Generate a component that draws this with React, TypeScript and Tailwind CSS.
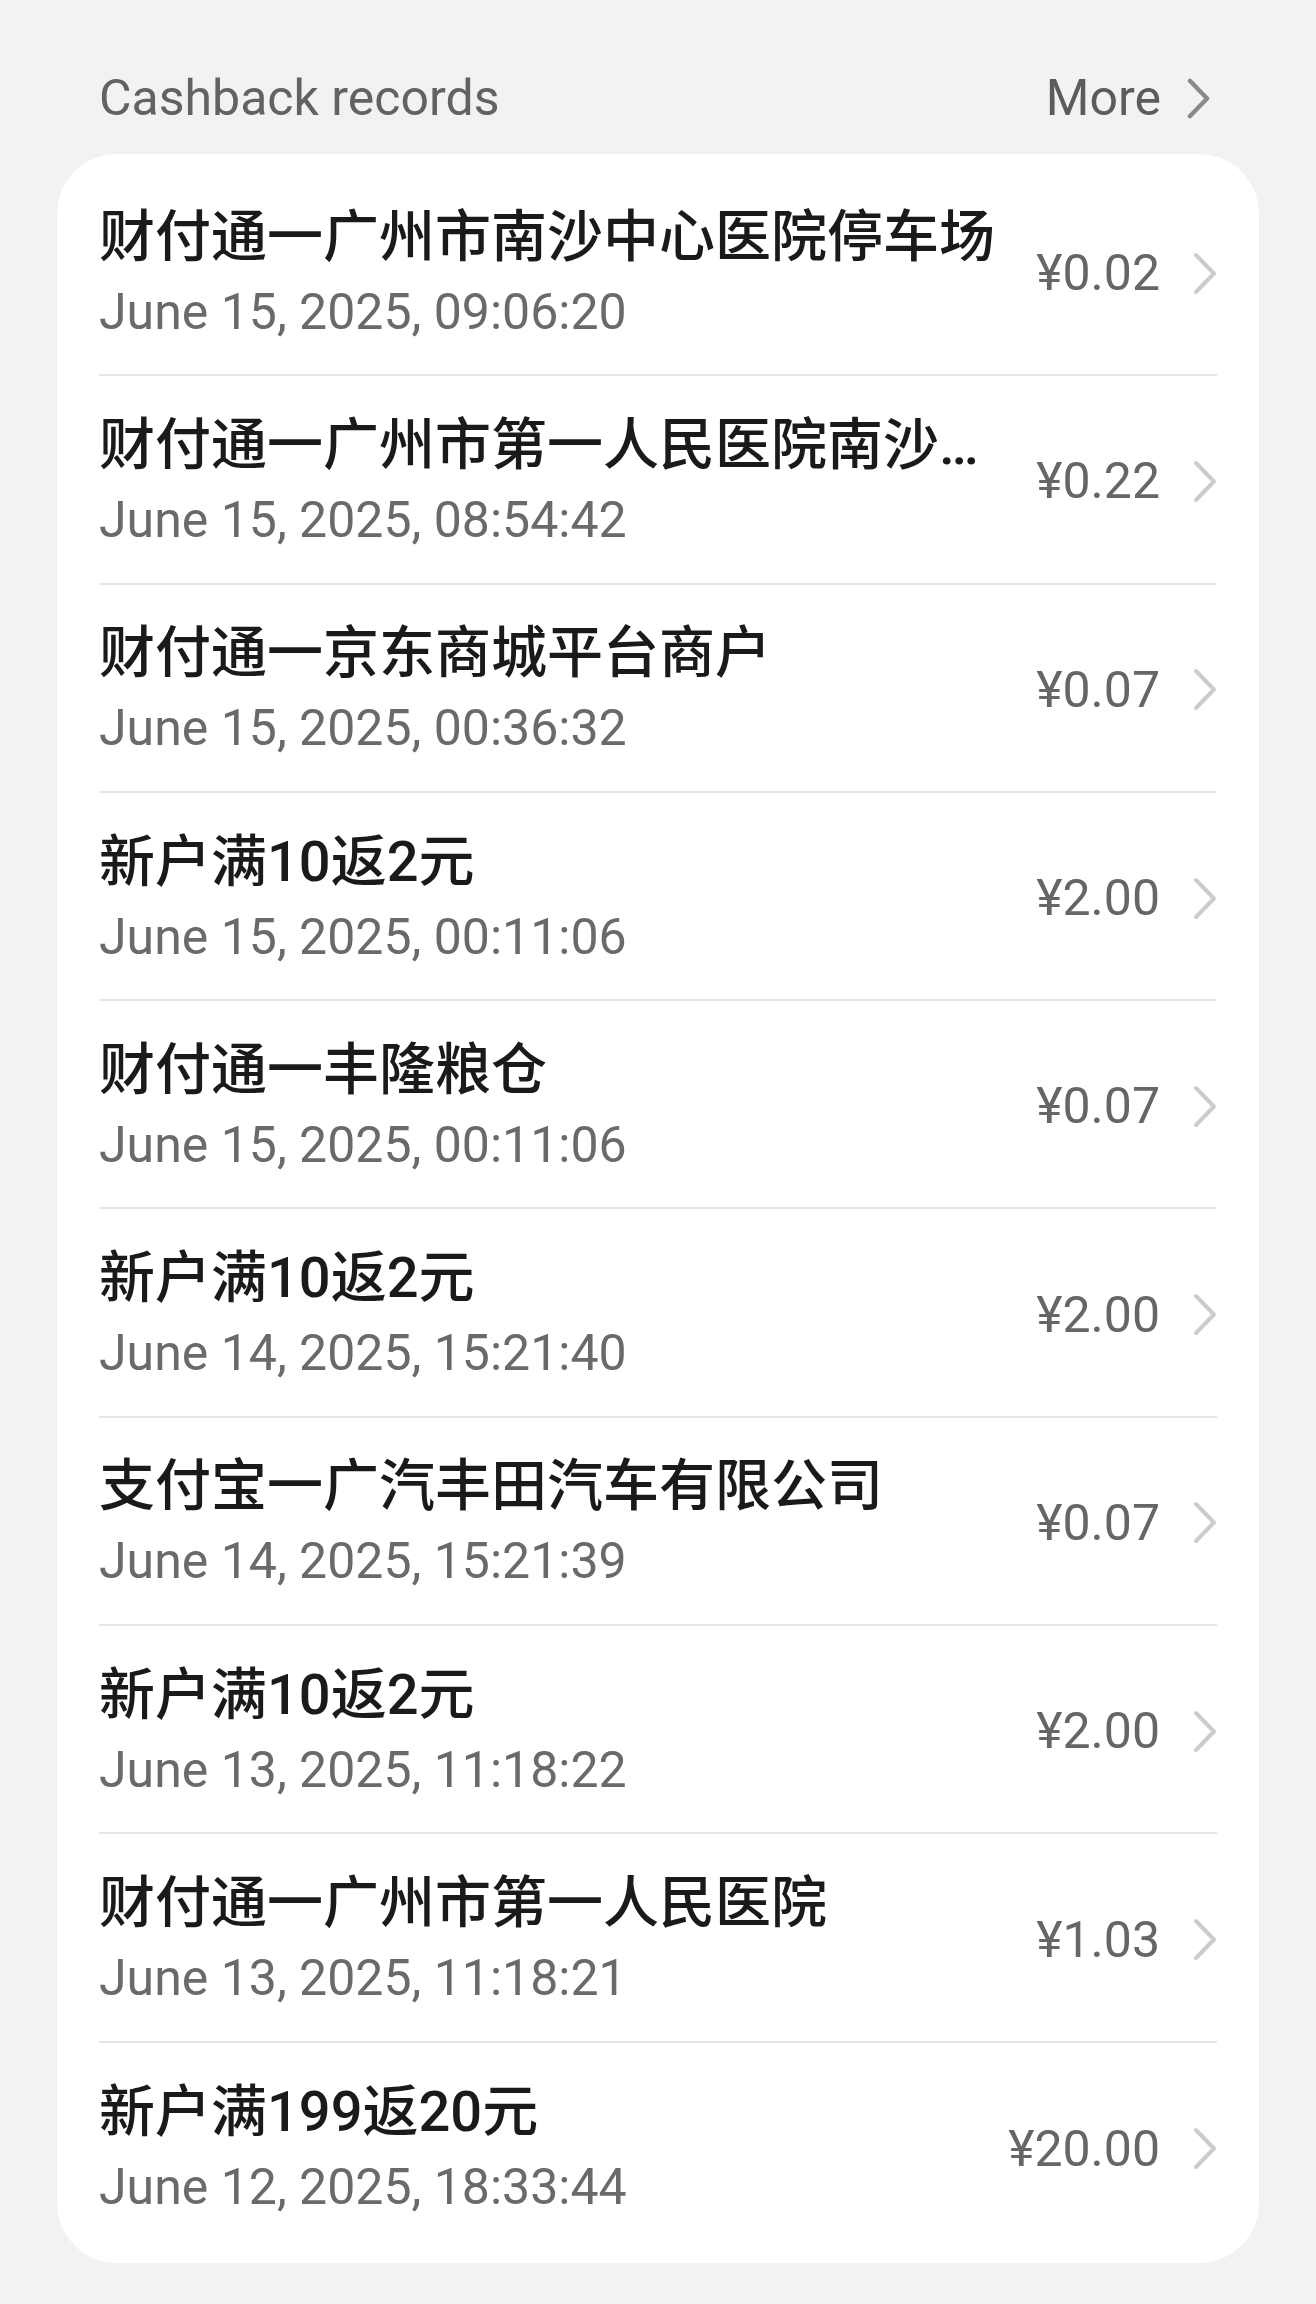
import React from "react";

const rows = [
  { t: "财付通一广州市南沙中心医院停车场", d: "June 15, 2025, 09:06:20", a: "¥0.02" },
  { t: "财付通一广州市第一人民医院南沙院区", d: "June 15, 2025, 08:54:42", a: "¥0.22" },
  { t: "财付通一京东商城平台商户", d: "June 15, 2025, 00:36:32", a: "¥0.07" },
  { t: "新户满10返2元", d: "June 15, 2025, 00:11:06", a: "¥2.00" },
  { t: "财付通一丰隆粮仓", d: "June 15, 2025, 00:11:06", a: "¥0.07" },
  { t: "新户满10返2元", d: "June 14, 2025, 15:21:40", a: "¥2.00" },
  { t: "支付宝一广汽丰田汽车有限公司", d: "June 14, 2025, 15:21:39", a: "¥0.07" },
  { t: "新户满10返2元", d: "June 13, 2025, 11:18:22", a: "¥2.00" },
  { t: "财付通一广州市第一人民医院", d: "June 13, 2025, 11:18:21", a: "¥1.03" },
  { t: "新户满199返20元", d: "June 12, 2025, 18:33:44", a: "¥20.00" },
];

function Chevron({ color, w = 24, h = 43, sw = 4.5 }: { color: string; w?: number; h?: number; sw?: number }) {
  return (
    <svg width={w} height={h} viewBox="0 0 24 43" fill="none">
      <path d="M3 3 L21 21.5 L3 40" stroke={color} strokeWidth={sw} strokeLinecap="round" strokeLinejoin="round" />
    </svg>
  );
}

export default function App() {
  return (
    <div
      className="min-h-[2304px] w-full bg-[#f1f2f4] px-[57px]"
      style={{ fontFamily: "Roboto, 'Noto Sans CJK SC', sans-serif" }}
    >
      <div className="flex items-center justify-between pl-[42px] pr-[49px] pt-[60px] pb-[18px]">
        <span className="text-[50px] leading-[76px] text-[#626262]">Cashback records</span>
        <div className="flex items-center gap-[26px]">
          <span className="text-[50px] leading-[76px] text-[#5c5c5c]">More</span>
          <Chevron color="#8a8a8a" w={23} />
        </div>
      </div>
      <div className="rounded-[60px] bg-white px-[42px] pt-[14px] pb-[12px]">
        {rows.map((r, i) => (
          <div
            key={i}
            className={
              "flex h-[208.3px] items-center " +
              (i < rows.length - 1 ? "border-b-2 border-[#e6e6e6]" : "")
            }
          >
            <div className="flex w-[896px] min-w-0 flex-col pt-[12px]">
              <div className="truncate text-[56px] font-medium leading-[70px] text-[#1a1a1a]">{r.t}</div>
              <div className="text-[50px] leading-[81px] text-[#6a6a6a]">{r.d}</div>
            </div>
            <div className="flex flex-1 items-center justify-end gap-[33px] pt-[4px]">
              <span className="text-[50px] leading-[60px] text-[#666666]">{r.a}</span>
              <Chevron color="#cccccc" sw={4} />
            </div>
          </div>
        ))}
      </div>
    </div>
  );
}
